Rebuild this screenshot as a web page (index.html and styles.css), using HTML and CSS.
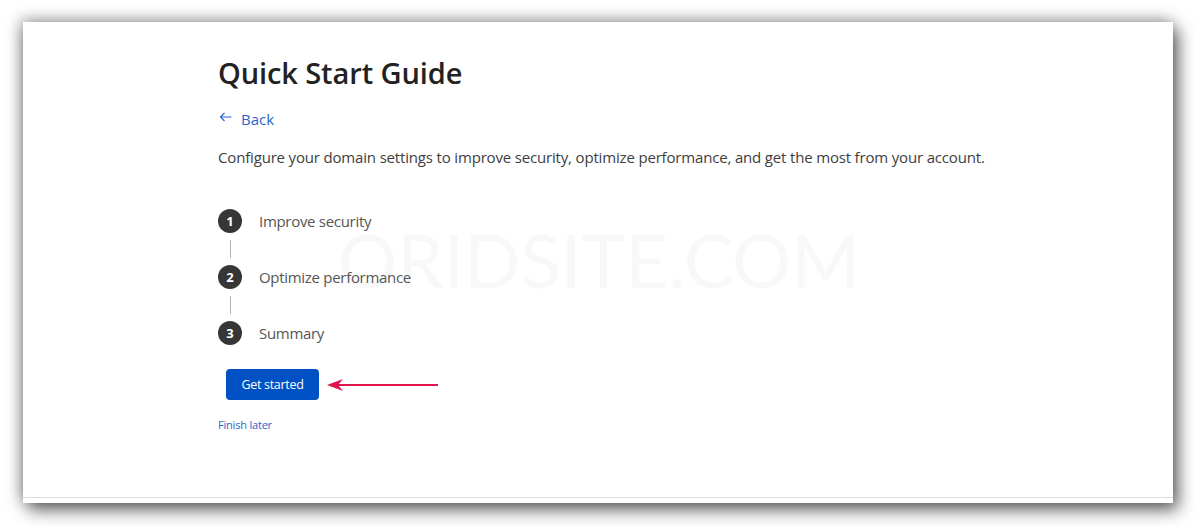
FILE: index.html
```html
<!DOCTYPE html>
<html lang="en">
<head>
  <meta charset="UTF-8">
  <meta name="viewport" content="width=device-width, initial-scale=1.0">
  <title>Quick Start Guide</title>
  <link rel="stylesheet" href="styles.css">
</head>
<body>
<div class="frame">
  <div class="card">
    <div class="watermark">ORIDSITE.COM</div>
    <div class="content">
      <h1>Quick Start Guide</h1>
      <a class="back" href="#">
        <svg class="back-arrow" width="13" height="10" viewBox="0 0 13 10">
          <path d="M12.5 5 H1.5 M5.5 1 L1.5 5 L5.5 9" fill="none" stroke="#2a64d0" stroke-width="1.2"/>
        </svg>Back</a>
      <p class="intro">Configure your domain settings to improve security, optimize performance, and get the most from your account.</p>

      <ol class="steps">
        <li class="step"><span class="num">1</span><span class="label">Improve security</span></li>
        <li class="connector"></li>
        <li class="step"><span class="num">2</span><span class="label">Optimize performance</span></li>
        <li class="connector"></li>
        <li class="step"><span class="num">3</span><span class="label">Summary</span></li>
      </ol>

      <div class="actions">
        <button class="btn-primary">Get started</button>
        <svg class="pointer" width="112" height="12" viewBox="0 0 112 12">
          <line x1="8" y1="6" x2="111" y2="6" stroke="#e0144c" stroke-width="2.2"/>
          <path d="M0 6 L16 0 L11 6 L16 12 Z" fill="#e0144c"/>
        </svg>
      </div>
      <a class="finish" href="#">Finish later</a>
    </div>
    <div class="card-foot"></div>
  </div>
</div>
</body>
</html>
```

FILE: styles.css
```css
html, body {
  margin: 0;
  padding: 0;
  background: #fff;
}
body {
  font-family: "Open Sans", "Noto Sans", sans-serif;
  width: 1196px;
  height: 527px;
  overflow: hidden;
}
.frame {
  padding: 22px 0 0 23px;
}
.card {
  position: relative;
  width: 1150px;
  height: 481px;
  background: #fff;
  box-shadow: 5px 7px 16px rgba(0, 0, 0, 0.6), -3px -3px 14px rgba(0, 0, 0, 0.3);
  display: flex;
  flex-direction: column;
}
.content {
  flex: 1;
  padding: 0 0 0 195px;
  position: relative;
}
.card-foot {
  height: 5px;
  border-top: 1px solid #dcdcdc;
}
.watermark {
  position: absolute;
  left: 315px;
  top: 193px;
  font-family: "Lato", sans-serif;
  font-size: 74px;
  font-weight: 400;
  letter-spacing: 0;
  color: #f8f8f8;
}
h1 {
  margin: 0;
  padding-top: 31px;
  font-size: 29px;
  font-weight: 600;
  color: #222;
  line-height: 40px;
  letter-spacing: -0.1px;
}
.back {
  display: inline-flex;
  align-items: center;
  margin-top: 16px;
  color: #2a64d0;
  text-decoration: none;
  font-size: 15px;
  line-height: 20px;
}
.back-arrow {
  margin: -5px 9px 0 1px;
}
.intro {
  margin: 18px 0 0;
  font-size: 15px;
  line-height: 20px;
  color: #3e3e3e;
  letter-spacing: -0.17px;
}
.steps {
  list-style: none;
  margin: 42px 0 0;
  padding: 0;
}
.step {
  display: flex;
  align-items: center;
  height: 24px;
}
.num {
  width: 24px;
  height: 24px;
  border-radius: 50%;
  background: #363636;
  color: #fff;
  font-size: 13px;
  font-weight: 700;
  display: flex;
  align-items: center;
  justify-content: center;
}
.label {
  margin-left: 17px;
  font-size: 15px;
  color: #555;
  letter-spacing: -0.3px;
}
.connector {
  width: 1px;
  height: 18px;
  margin: 7px 0 7px 12px;
  background: #b5b5b5;
}
.actions {
  display: flex;
  align-items: center;
  margin-top: 24px;
  padding-left: 8px;
}
.btn-primary {
  width: 93px;
  height: 31px;
  background: #0051c3;
  color: #fff;
  border: none;
  border-radius: 4px;
  font-family: "Open Sans", sans-serif;
  font-size: 12.5px;
  letter-spacing: -0.3px;
  cursor: pointer;
}
.pointer {
  margin-left: 8px;
}
.finish {
  display: inline-block;
  margin-top: 17px;
  font-size: 11px;
  color: #2a64d0;
  text-decoration: none;
  letter-spacing: -0.2px;
}
```
